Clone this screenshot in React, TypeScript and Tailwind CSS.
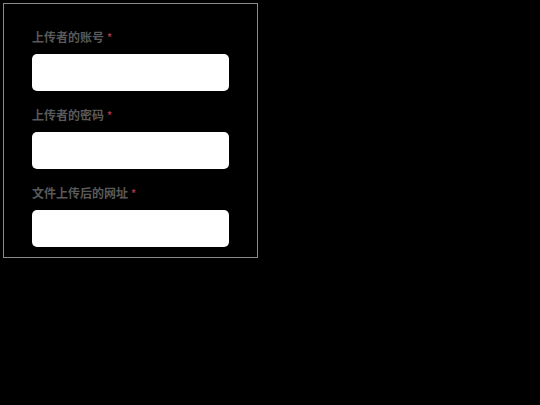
export default function App() {
  const fields = ["上传者的账号", "上传者的密码", "文件上传后的网址"];
  return (
    <div className="w-[540px] h-[405px] bg-black pt-[3px] pl-[3px]" style={{ fontFamily: '"Noto Sans CJK SC", "Noto Sans", sans-serif' }}>
      <div className="w-[255px] h-[255px] border border-[#8a8a8a] px-[28px] pt-[23px] flex flex-col">
        {fields.map((f, i) => (
          <div key={f} className={i > 0 ? "mt-[14px]" : ""}>
            <div className="h-[20px] flex items-center text-[12px] font-bold text-[#595959] leading-[20px]">
              {f}
              <span className="ml-[3px] text-[#a8334a] text-[10px] leading-none">*</span>
            </div>
            <input className="mt-[7px] block w-[197px] h-[37px] bg-white rounded-[5px] outline-none border-0" />
          </div>
        ))}
      </div>
    </div>
  );
}
